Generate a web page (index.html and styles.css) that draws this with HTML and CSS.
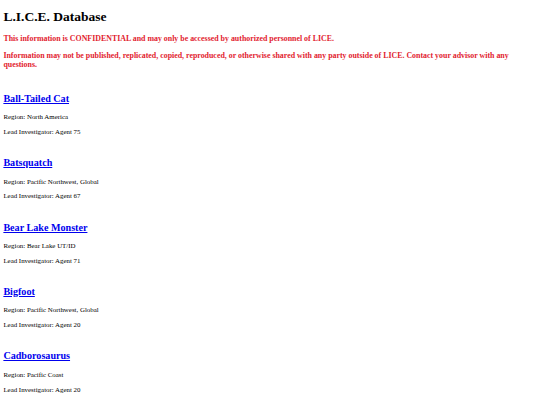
FILE: index.html
```html
<!DOCTYPE html>
<html>
<head>
<meta charset="utf-8">
<title>L.I.C.E. Database</title>
<link rel="stylesheet" href="styles.css">
</head>
<body>
<h1 class="title">L.I.C.E. Database</h1>
<h3 class="warning">This information is CONFIDENTIAL and may only be accessed by authorized personnel of LICE.</h3>
<h3 class="warning">Information may not be published, replicated, copied, reproduced, or otherwise shared with any party outside of LICE. Contact your advisor with any questions.</h3>
<div class="list">
  <div class="entry">
    <h2 class="name"><a href="#">Ball-Tailed Cat</a></h2>
    <p class="meta">Region: North America</p>
    <p class="meta">Lead Investigator: Agent 75</p>
  </div>
  <div class="entry">
    <h2 class="name"><a href="#">Batsquatch</a></h2>
    <p class="meta">Region: Pacific Northwest, Global</p>
    <p class="meta">Lead Investigator: Agent 67</p>
  </div>
  <div class="entry">
    <h2 class="name"><a href="#">Bear Lake Monster</a></h2>
    <p class="meta">Region: Bear Lake UT/ID</p>
    <p class="meta">Lead Investigator: Agent 71</p>
  </div>
  <div class="entry">
    <h2 class="name"><a href="#">Bigfoot</a></h2>
    <p class="meta">Region: Pacific Northwest, Global</p>
    <p class="meta">Lead Investigator: Agent 20</p>
  </div>
  <div class="entry">
    <h2 class="name"><a href="#">Cadborosaurus</a></h2>
    <p class="meta">Region: Pacific Coast</p>
    <p class="meta">Lead Investigator: Agent 20</p>
  </div>
</div>
</body>
</html>
```
FILE: styles.css
```css
html, body {
  background: #ffffff;
}
body {
  margin: 3.375px;
  font-family: "Times New Roman", "Liberation Serif", "DejaVu Serif", serif;
  font-size: 6.75px;
  color: #000000;
}
.title {
  font-size: 13.5px;
  font-weight: bold;
  margin: 6px 0 9.05px;
}
.warning {
  font-size: 7.9px;
  font-weight: bold;
  color: #e2232f;
  margin: 7.9px 0;
}
.list {
  padding-top: 7.1px;
}
.entry {
  padding-bottom: 6.15px;
}
.name {
  font-size: 10.125px;
  font-weight: bold;
  margin: 8.4px 0 9.4px;
}
.name a {
  color: #0000ee;
  text-decoration: underline;
}
.meta {
  font-size: 6.9px;
  margin: 7.75px 0;
}
```
